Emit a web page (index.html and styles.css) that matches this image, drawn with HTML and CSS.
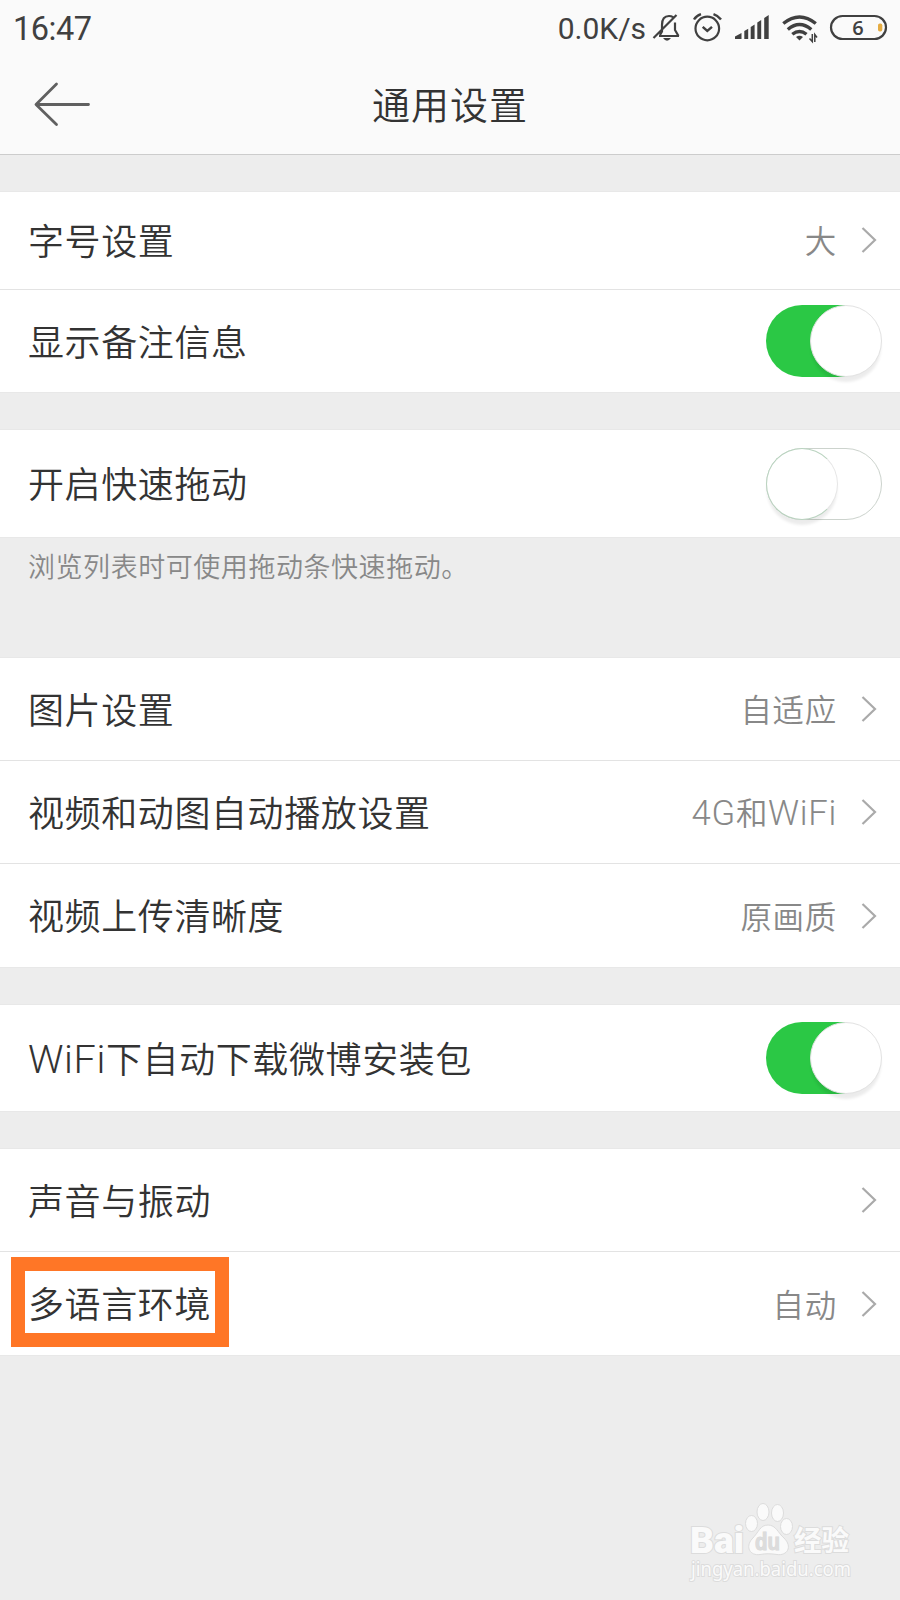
FILE: index.html
```
<!DOCTYPE html>
<html lang="zh-CN">
<head>
    <meta charset="UTF-8">
    <meta name="viewport" content="width=device-width, initial-scale=1.0">
    <title>通用设置</title>
    <link rel="stylesheet" href="styles.css">
</head>
<body>
    <!-- 顶部:状态栏和标题 -->
    <header class="top">
        <div class="status-bar">
            <span class="time">16:47</span>
            <span class="speed">0.0K/s</span>
            <svg class="status-icons" width="240" height="40" viewBox="652 8 240 40" fill="none" stroke="#404040" stroke-width="2.2">
                <!-- 静音铃铛 -->
                <path d="M659 36H679M660 35L662 31.500V25C662 19 664 16 669 16C670.500 16 672 16.500 673 17.200M675 22.500V30L678.500 36M653.500 38L676.500 15"/>
                <path d="M663 38H671Q667 43.500 663 38Z" fill="#404040" stroke="none"/>
                <!-- 闹钟 -->
                <circle cx="707.300" cy="28.500" r="11.800"/>
                <path d="M702.700 26.800L707.300 31L712 26.800M694 19.500Q696 16 701 14.200M713.500 14.200Q718.500 16 721 19.500" stroke-width="2.400"/>
                <!-- 信号 -->
                <path d="M735 39V36.500L741.500 33V39ZM744.300 39V31L748.200 28.800V39ZM750.700 39V27L754.600 24.500V39ZM757.300 39V22.500L761.200 20V39ZM764.200 39V18L768.700 15V39Z" fill="#404040" stroke="none"/>
                <!-- WiFi -->
                <path d="M783.300 23.500Q799.500 10.500 815.800 23.500M787.800 29.500Q799.500 19.500 811.300 29.500M792.300 34.300Q799.500 28.500 806.500 34.300" stroke-width="3.400"/>
                <path d="M796 37Q799.500 34.500 803 37L799.500 40.500Z" fill="#404040" stroke="none"/>
                <path d="M812.300 34V41.500L809.500 38.500M814.800 42V34.500L817 37.500" stroke-width="1.500"/>
                <!-- 电池 -->
                <rect x="831" y="16" width="55" height="23" rx="11.500"/>
                <rect x="878" y="23.500" width="4.300" height="8" rx="1.800" fill="#e5ac42" stroke="none"/>
                <text class="battery-text" x="858" y="35" text-anchor="middle">6</text>
            </svg>
        </div>
        <div class="title-bar">
            <svg class="back" width="60" height="50" viewBox="0 0 60 50" fill="none" stroke="#606060" stroke-width="2.800" stroke-linecap="round" stroke-linejoin="round">
                <path d="M56.500 25.500H4.500M24.500 5L4 25.500L24.500 45.500"/>
            </svg>
            <h1 class="title">通用设置</h1>
        </div>
    </header>

    <!-- 设置列表 -->
    <main class="settings">
        <section class="group">
            <div class="row row-first">
                <span class="label">字号设置</span>
                <span class="value">大</span>
                <svg class="arrow" viewBox="0 0 16 28"><path d="M1.500 2L14 14L1.500 26"/></svg>
            </div>
            <div class="row">
                <span class="label">显示备注信息</span>
                <span class="switch on"></span>
            </div>
        </section>

        <section class="group group-drag">
            <div class="row row-single">
                <span class="label">开启快速拖动</span>
                <span class="switch"></span>
            </div>
        </section>
        <p class="note">浏览列表时可使用拖动条快速拖动。</p>

        <section class="group">
            <div class="row">
                <span class="label">图片设置</span>
                <span class="value">自适应</span>
                <svg class="arrow" viewBox="0 0 16 28"><path d="M1.500 2L14 14L1.500 26"/></svg>
            </div>
            <div class="row">
                <span class="label">视频和动图自动播放设置</span>
                <span class="value"><span class="latin">4G</span>和<span class="latin">WiFi</span></span>
                <svg class="arrow" viewBox="0 0 16 28"><path d="M1.500 2L14 14L1.500 26"/></svg>
            </div>
            <div class="row row-last">
                <span class="label">视频上传清晰度</span>
                <span class="value">原画质</span>
                <svg class="arrow" viewBox="0 0 16 28"><path d="M1.500 2L14 14L1.500 26"/></svg>
            </div>
        </section>

        <section class="group">
            <div class="row row-wifi">
                <span class="label"><span class="latin">WiFi</span>下自动下载微博安装包</span>
                <span class="switch on"></span>
            </div>
        </section>

        <section class="group">
            <div class="row">
                <span class="label">声音与振动</span>
                <svg class="arrow" viewBox="0 0 16 28"><path d="M1.500 2L14 14L1.500 26"/></svg>
            </div>
            <div class="row row-last">
                <span class="label marked">多语言环境</span>
                <span class="value">自动</span>
                <svg class="arrow" viewBox="0 0 16 28"><path d="M1.500 2L14 14L1.500 26"/></svg>
            </div>
        </section>
    </main>

    <!-- 水印 -->
    <svg class="watermark" width="180" height="90" viewBox="680 1495 180 90">
        <text class="wm-name" x="690" y="1553" textLength="54" lengthAdjust="spacingAndGlyphs">Bai</text>
        <g class="wm-paw">
            <ellipse cx="751.500" cy="1523.500" rx="6" ry="8"/>
            <ellipse cx="763" cy="1512" rx="6" ry="8.500"/>
            <ellipse cx="777.500" cy="1513" rx="6" ry="8.500"/>
            <ellipse cx="786.500" cy="1526.500" rx="6" ry="8"/>
            <path d="M768 1525C776 1525 778 1533 784 1538C793 1547 787 1556 777 1554.500C770 1553.500 766 1553.500 760 1554.500C750 1556 745 1547 752 1539C759 1532 760 1525 768 1525Z"/>
        </g>
        <text class="wm-du" x="755" y="1550" textLength="25" lengthAdjust="spacingAndGlyphs">du</text>
        <text class="wm-cn" x="794" y="1551" textLength="55" lengthAdjust="spacingAndGlyphs">经验</text>
        <text class="wm-url" x="691" y="1576" textLength="160" lengthAdjust="spacingAndGlyphs">jingyan.baidu.com</text>
    </svg>
</body>
</html>
```
FILE: styles.css
```
/* Основа */
*, *::before, *::after {
    box-sizing: border-box;
}
body {
    margin: 0;
    width: 900px;
    height: 1600px;
    position: relative;
    overflow: hidden;
    background: #ededed;
    color: #333;
    font-family: "Noto Sans CJK SC", sans-serif;
    font-weight: 350;
}
.top {
    height: 155px;
    background: #fafafa;
    border-bottom: 1px solid #ccc;
}
.status-bar {
    height: 56px;
    padding: 1px 8px 0 13px;
    display: flex;
    align-items: center;
    font-family: Roboto, sans-serif;
    font-weight: 400;
    color: #404040;
}
.time {
    padding-top: 1px;
    font-size: 32.5px;
    letter-spacing: -0.5px;
}
.speed {
    margin-left: auto;
    margin-right: 6px;
    font-size: 30px;
}
.status-icons {
    margin-top: -1px;
}
.battery-text {
    font: 600 20px "Open Sans", sans-serif;
    fill: #404040;
    stroke: none;
}
.title-bar {
    height: 98px;
    padding-bottom: 5px;
    position: relative;
    display: flex;
    align-items: center;
    justify-content: center;
}
.back {
    position: absolute;
    left: 32px;
    top: 23px;
}
.title {
    margin: 0;
    font-size: 38px;
    font-weight: 350;
    letter-spacing: 1px;
}

/* 列表 */
.settings {
    padding-top: 37px;
}
.group {
    margin-bottom: 38px;
    background: #fff;
    box-shadow: 0 0 0 1px #e8e8e8;
}
.group-drag {
    margin-bottom: 0;
}
.row {
    height: 102px;
    padding: 0 18px 0 28px;
    display: flex;
    align-items: center;
}
.row + .row {
    height: 103px;
    border-top: 1px solid #e3e3e3;
}
.row-first {
    height: 97px;
    padding-bottom: 1px;
}
.row + .row-last {
    height: 104px;
}
.row-single {
    height: 107px;
}
.row-wifi {
    height: 106px;
}
.label {
    margin-right: auto;
    padding-bottom: 3px;
    font-size: 36px;
    line-height: 48px;
    letter-spacing: 0.6px;
}
.value {
    padding-bottom: 2px;
    color: #888;
    font-size: 31.5px;
    line-height: 48px;
    letter-spacing: 0.7px;
}
.latin {
    font-family: Roboto, sans-serif;
    font-weight: 300;
    font-size: 1.1em;
    line-height: 1;
}
.arrow {
    width: 16px;
    height: 28px;
    margin: 0 5px 0 24px;
    fill: none;
    stroke: #aaa;
    stroke-width: 2.2;
}
.note {
    height: 121px;
    margin: 0;
    padding: 9px 28px;
    font-size: 27px;
    letter-spacing: 0.55px;
    color: #888;
}

/* 开关 */
.switch {
    width: 116px;
    height: 72px;
    border: 1px solid #ccd3cd;
    border-radius: 36px;
    display: flex;
}
.switch::before {
    content: "";
    width: 72px;
    height: 72px;
    margin: -1px 0 0 -1px;
    border-radius: 50%;
    background: #fff;
    border: 1px solid #b9d3bf;
    border-right-color: #e6e6e6;
    box-shadow: 0 6px 3px -1px rgba(0, 0, 0, 0.08);
}
.switch.on {
    background: linear-gradient(to right, #2bc845 68%, transparent 68%);
    border: none;
    justify-content: flex-end;
}
.switch.on::before {
    margin: 0;
    border-color: #e2e2e2;
}

/* 高亮框 */
.marked {
    position: relative;
}
.marked::after {
    content: "";
    position: absolute;
    left: -17px;
    top: -21px;
    width: 218px;
    height: 90px;
    border: 14px solid #ff7626;
}

/* 水印 */
.watermark {
    position: absolute;
    left: 680px;
    top: 1495px;
    fill: #fafafa;
    stroke: #dcdcdc;
    stroke-width: 1;
}
.watermark text {
    paint-order: stroke;
    stroke-width: 2;
}
.wm-name {
    font: 900 36px Roboto, sans-serif;
}
.watermark .wm-du {
    font: 700 23px "Liberation Sans", sans-serif;
    fill: #dcdcdc;
    stroke: #d8d8d8;
    stroke-width: 1;
}
.wm-cn {
    font: 700 28px "Noto Sans CJK SC", sans-serif;
}
.wm-url {
    font: 400 20px "Noto Sans", sans-serif;
}
```
